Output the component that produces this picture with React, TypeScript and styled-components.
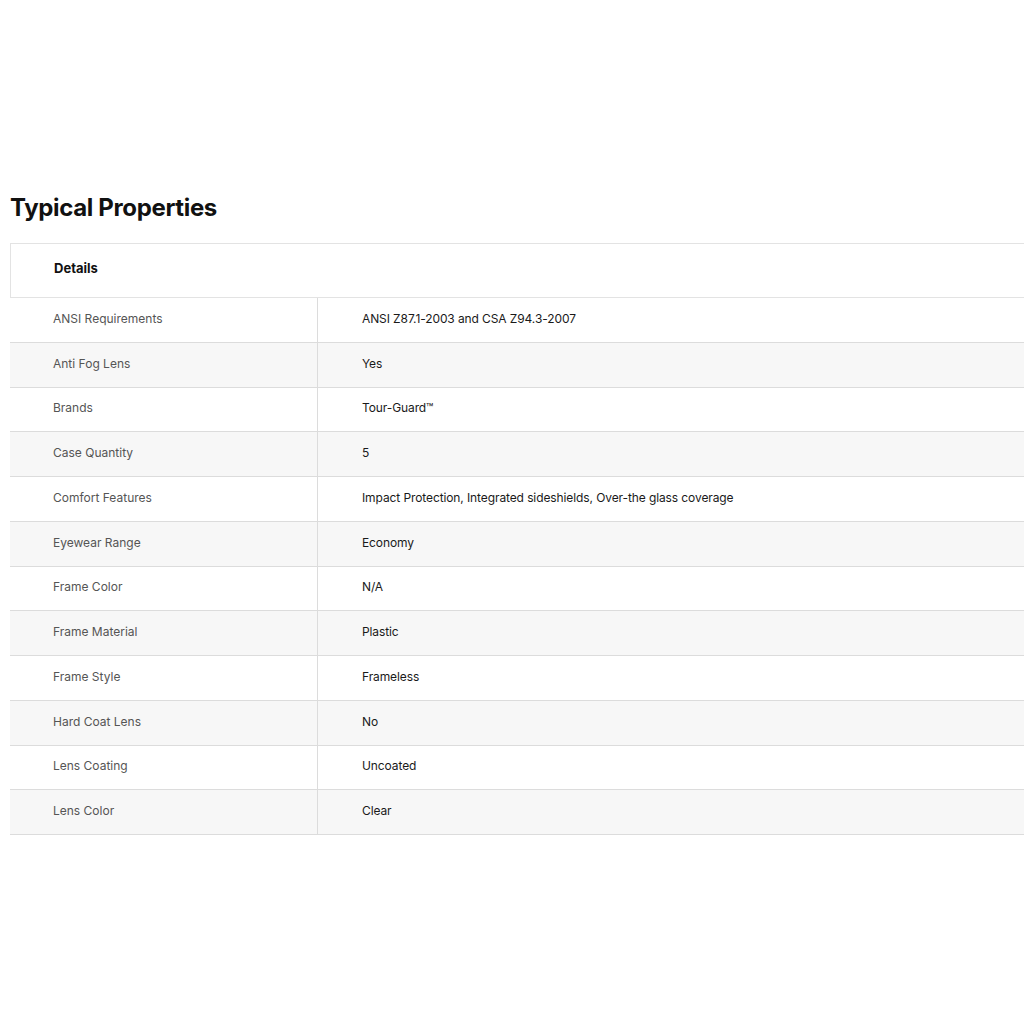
import React from "react";
import styled, { createGlobalStyle } from "styled-components";

const Global = createGlobalStyle`
  html, body { margin: 0; padding: 0; background: #fff; overflow-x: hidden; }
  body { font-family: Inter, "Noto Sans", "Liberation Sans", sans-serif; }
`;

const Page = styled.div`
  padding: 193px 0 0 10px;
`;

const Title = styled.h2`
  margin: 0 0 20px 0;
  font-size: 24px;
  line-height: 30px;
  font-weight: 700;
  color: #111;
  letter-spacing: -0.35px;
`;

const Table = styled.div`
  width: 1014px;
`;

const Header = styled.div`
  height: 53px;
  box-sizing: border-box;
  height: 55px;
  border: 1px solid #e3e3e3;
  border-right: none;
  display: flex;
  align-items: center;
  padding: 0 0 5px 43px;
  font-size: 13px;
  font-weight: 700;
  color: #111;
`;

const Row = styled.div<{ $shade: boolean }>`
  display: grid;
  grid-template-columns: 308px 1fr;
  height: 43.75px;
  border-bottom: 1px solid #dcdcdc;
  background: ${(p) => (p.$shade ? "#f7f7f7" : "#fff")};
`;

const Label = styled.div`
  display: flex;
  align-items: center;
  padding: 0 0 3px 43px;
  border-right: 1px solid #dcdcdc;
  font-size: 12px;
  color: #555;
`;

const Value = styled.div`
  display: flex;
  align-items: center;
  padding: 0 0 3px 44px;
  font-size: 12px;
  color: #1a1a1a;
  letter-spacing: -0.1px;
`;

const rows: [string, string][] = [
  ["ANSI Requirements", "ANSI Z87.1-2003 and CSA Z94.3-2007"],
  ["Anti Fog Lens", "Yes"],
  ["Brands", "Tour-Guard™"],
  ["Case Quantity", "5"],
  ["Comfort Features", "Impact Protection, Integrated sideshields, Over-the glass coverage"],
  ["Eyewear Range", "Economy"],
  ["Frame Color", "N/A"],
  ["Frame Material", "Plastic"],
  ["Frame Style", "Frameless"],
  ["Hard Coat Lens", "No"],
  ["Lens Coating", "Uncoated"],
  ["Lens Color", "Clear"],
];

export default function App() {
  return (
    <>
      <Global />
      <Page>
        <Title>Typical Properties</Title>
        <Table>
          <Header>Details</Header>
          {rows.map(([k, v], i) => (
            <Row key={k} $shade={i % 2 === 1}>
              <Label>{k}</Label>
              <Value>{v}</Value>
            </Row>
          ))}
        </Table>
      </Page>
    </>
  );
}
